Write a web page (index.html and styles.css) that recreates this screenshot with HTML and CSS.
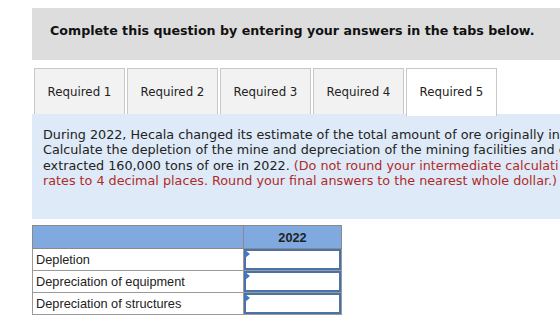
FILE: index.html
```html
<!DOCTYPE html>
<html lang="en">

<head>
    <meta charset="UTF-8">
    <title>Required 5</title>
    <link rel="stylesheet" href="styles.css">
</head>

<body>
    <div class="page">
        <div class="instructions">Complete this question by entering your answers in the tabs below.</div>

        <div class="tabs">
            <div class="tab">Required 1</div>
            <div class="tab">Required 2</div>
            <div class="tab">Required 3</div>
            <div class="tab">Required 4</div>
            <div class="tab active">Required 5</div>
        </div>

        <div class="panel">
            <p class="question">
                <span class="line">During 2022, Hecala changed its estimate of the total amount of ore originally in</span>
                <span class="line">Calculate the depletion of the mine and depreciation of the mining facilities and e</span>
                <span class="line">extracted 160,000 tons of ore in 2022. <span class="note">(Do not round your intermediate calculati</span></span>
                <span class="line note">rates to 4 decimal places. Round your final answers to the nearest whole dollar.)</span>
            </p>
        </div>

        <table class="answers">
            <tr>
                <th class="label-col"></th>
                <th class="year-col">2022</th>
            </tr>
            <tr>
                <td>Depletion</td>
                <td class="cell"><input type="text"></td>
            </tr>
            <tr>
                <td>Depreciation of equipment</td>
                <td class="cell"><input type="text"></td>
            </tr>
            <tr>
                <td>Depreciation of structures</td>
                <td class="cell"><input type="text"></td>
            </tr>
        </table>
    </div>
</body>

</html>
```

FILE: styles.css
```css
body {
    margin: 0;
    overflow: hidden;
    background: #fff;
    font-family: "DejaVu Sans", Verdana, sans-serif;
    color: #222;
}

.page {
    width: 720px;
    padding: 8px 0 0 32px;
}

.instructions {
    background: #dddddd;
    height: 52px;
    line-height: 45px;
    padding-left: 18px;
    font-size: 12.65px;
    font-weight: bold;
    color: #111;
}

.tabs {
    display: flex;
    gap: 2px;
    margin-top: 8px;
    padding-left: 2px;
}

.tab {
    width: 89px;
    height: 45px;
    line-height: 47px;
    text-align: center;
    font-size: 11.8px;
    background: #f2f2f2;
    border: 1px solid #c8c8c8;
    border-bottom: none;
    color: #222;
}

.tab.active {
    background: #fff;
    height: 47px;
    margin-bottom: -2px;
    position: relative;
}

.panel {
    background: #deeaf7;
    height: 105px;
    padding: 13px 0 0 11px;
    box-sizing: border-box;
}

.question {
    margin: 0;
    font-size: 12.75px;
    line-height: 15.4px;
    color: #222;
}

.line {
    display: block;
    white-space: nowrap;
}

.note {
    color: #b02a2a;
}

.answers {
    margin-top: 6px;
    border-collapse: collapse;
    font-family: "Liberation Sans", Arial, sans-serif;
    font-size: 12.75px;
}

.answers th {
    background: #80aadf;
    height: 22px;
    border: 1px solid #8a8a8a;
    padding: 0;
    font-size: 12.75px;
    color: #222;
}

.label-col {
    width: 210px;
}

.year-col {
    width: 97px;
}

.answers td {
    border: 1px solid #9a9a9a;
    height: 21px;
    padding: 0 3px;
    color: #222;
}

.answers td.cell {
    padding: 0;
    position: relative;
}

.cell input {
    display: block;
    box-sizing: border-box;
    width: 100%;
    height: 21px;
    margin: 0;
    border: 2px solid #4a71a8;
    background: #fff;
}

.cell::before {
    content: "";
    position: absolute;
    left: 1px;
    top: 1px;
    border-top: 4px solid transparent;
    border-bottom: 4px solid transparent;
    border-left: 5px solid #3f77c9;
}
```
